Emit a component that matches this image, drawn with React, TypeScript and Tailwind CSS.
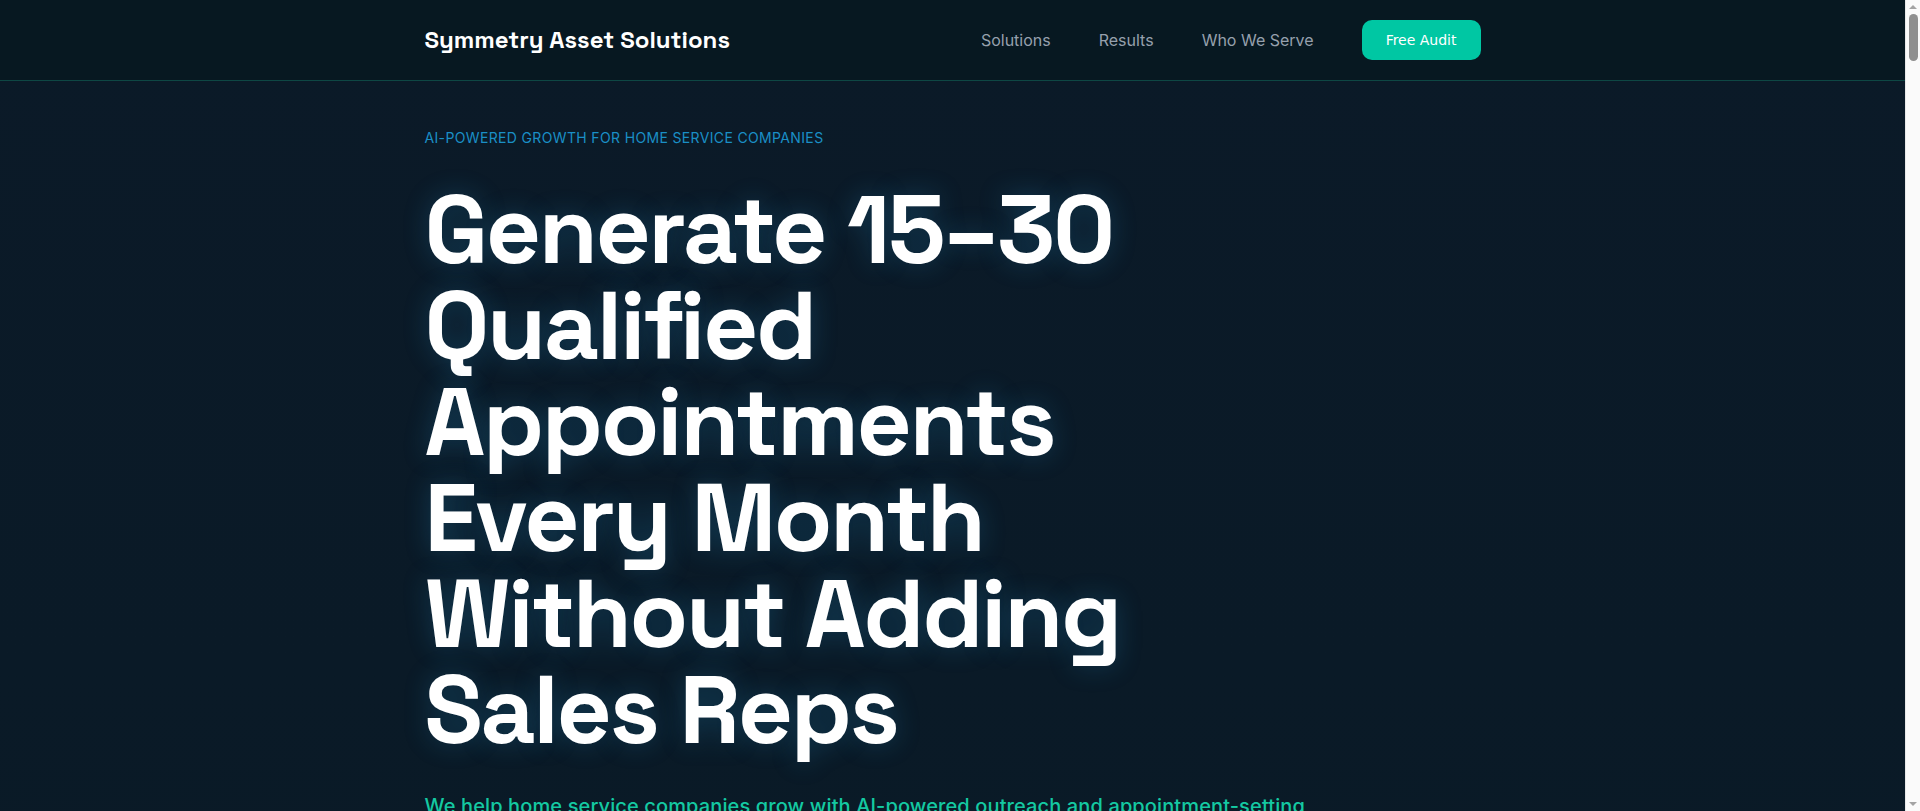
const navLinks = ["Solutions", "Results", "Who We Serve"];

function Header() {
  return (
    <header className="bg-[#071821] border-b border-[#0e4744]">
      <div className="max-w-6xl mx-auto px-12 h-20 flex items-center justify-between">
        <a
          href="#"
          className="text-white text-[24px] font-bold font-['Space_Grotesk','Inter',sans-serif]"
        >
          Symmetry Asset Solutions
        </a>
        <nav className="flex items-center gap-12">
          {navLinks.map((link) => (
            <a
              key={link}
              href="#"
              className="text-[16px] text-[#96a0ad] font-['Inter',sans-serif] hover:text-white transition-colors"
            >
              {link}
            </a>
          ))}
          <button className="px-6 py-2.5 bg-[#00c7a3] text-white text-[14px] leading-5 rounded-[10px] font-['DejaVu_Sans',sans-serif] hover:bg-[#00b090] transition-colors">
            Free Audit
          </button>
        </nav>
      </div>
    </header>
  );
}

function Hero() {
  return (
    <section className="relative">
      <div className="max-w-6xl mx-auto px-12 pt-[47px] pb-32">
        <p className="text-[14px] leading-5 tracking-[0.025em] uppercase text-[#1a8fc6] font-['Inter',sans-serif] mb-[34px]">
          AI-Powered Growth for Home Service Companies
        </p>
        <h1 className="max-w-3xl text-white text-[96px] leading-[96px] font-bold tracking-tight font-['Space_Grotesk','Inter',sans-serif] [text-shadow:0_0_26px_rgba(40,150,210,0.28)]">
          Generate 15–30 Qualified Appointments Every Month Without Adding Sales Reps
        </h1>
        <p className="mt-8 max-w-4xl text-[20px] leading-8 font-medium tracking-[0.006em] text-[#14c9a2] font-['Inter',sans-serif]">
          We help home service companies grow with AI-powered outreach and appointment-setting
          systems that fill your calendar with homeowners ready to buy.
        </p>
        <div className="mt-10 flex items-center gap-4">
          <button className="px-8 py-4 bg-[#00c7a3] text-white text-[16px] rounded-[10px] font-['Inter',sans-serif]">
            Get Your Free Audit
          </button>
          <button className="px-8 py-4 border border-[#1e3a4a] text-[#c9d2dc] text-[16px] rounded-[10px] font-['Inter',sans-serif]">
            See Results
          </button>
        </div>
      </div>
    </section>
  );
}

function Stats() {
  const stats = [
    { value: "15–30", label: "Qualified appointments per month" },
    { value: "3x", label: "Average pipeline growth" },
    { value: "0", label: "New sales reps required" },
  ];
  return (
    <section className="max-w-6xl mx-auto px-12 py-24 grid grid-cols-3 gap-8">
      {stats.map((s) => (
        <div key={s.label} className="border border-[#13303d] rounded-2xl p-8 bg-[#0d1f2d]">
          <div className="text-5xl font-bold text-white font-['Space_Grotesk','Inter',sans-serif]">{s.value}</div>
          <div className="mt-3 text-[#96a0ad] font-['Inter',sans-serif]">{s.label}</div>
        </div>
      ))}
    </section>
  );
}

// the reference was captured with a classic scrollbar showing
function Scrollbar() {
  return (
    <div className="fixed top-0 right-0 h-screen w-[15px] bg-[#fafafa] border-l border-[#e8e8e8] flex flex-col items-center">
      <div className="h-[14px] flex items-center justify-center">
        <div className="w-0 h-0 border-l-[4px] border-r-[4px] border-b-[4px] border-l-transparent border-r-transparent border-b-[#a3a3a3]" />
      </div>
      <div className="w-[9px] h-[47px] rounded-full bg-[#8f8f8f]" />
      <div className="flex-1" />
      <div className="h-[14px] flex items-center justify-center">
        <div className="w-0 h-0 border-l-[4px] border-r-[4px] border-t-[4px] border-l-transparent border-r-transparent border-t-[#a3a3a3]" />
      </div>
    </div>
  );
}

export default function App() {
  return (
    <div className="min-h-screen bg-[#0b1a28]">
      <div className="mr-[15px] bg-gradient-to-b from-[#0b1a28] via-[#091a26] to-[#0c1826]">
        <Header />
        <main>
          <Hero />
          <Stats />
          <div className="h-[1200px]" />
        </main>
      </div>
      <Scrollbar />
    </div>
  );
}
